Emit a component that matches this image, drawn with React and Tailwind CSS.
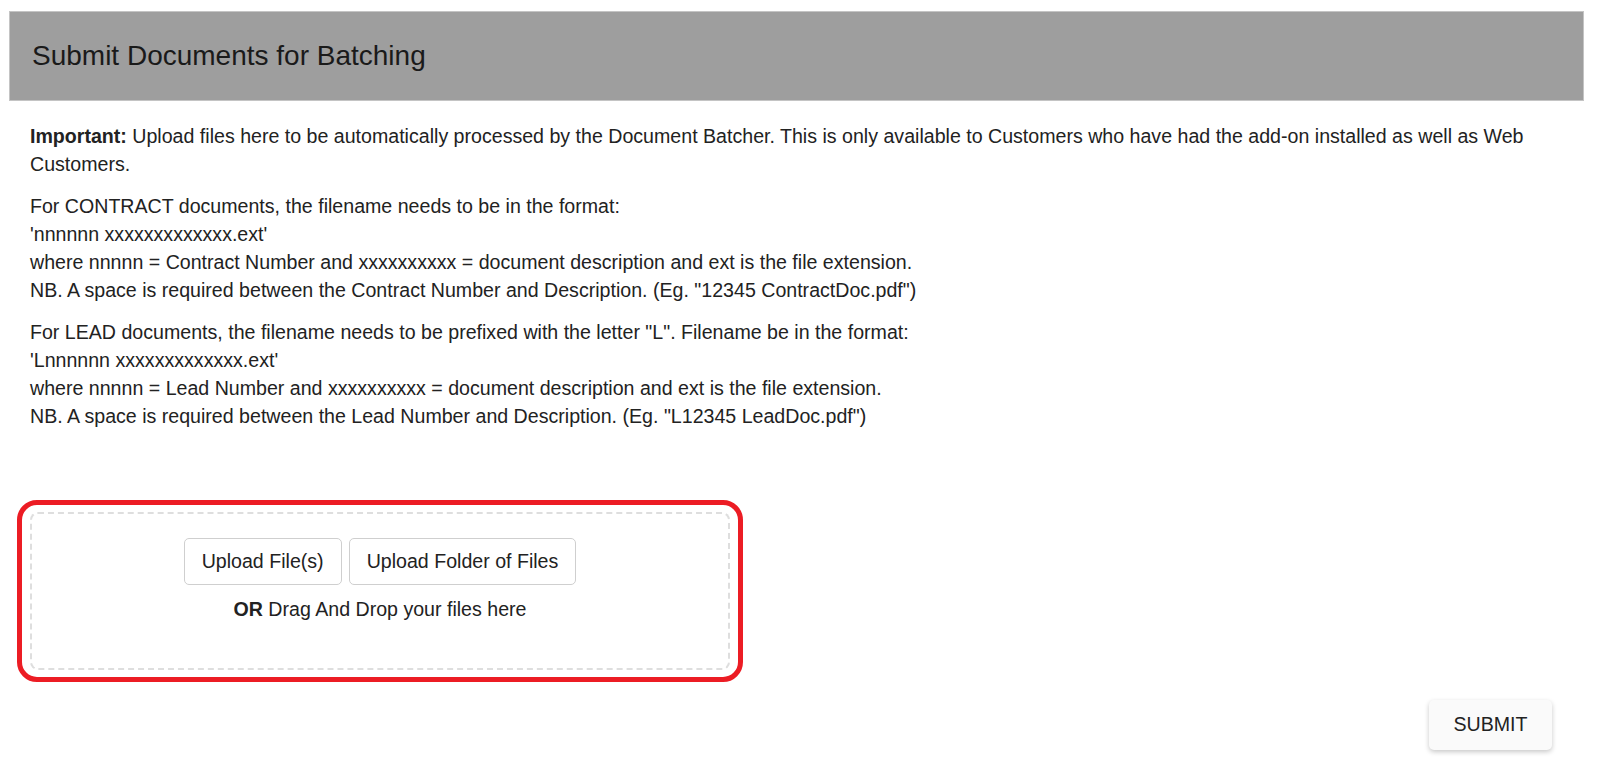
export default function App() {
  const font = { fontFamily: '"Liberation Sans", Arial, sans-serif' };
  return (
    <div className="min-h-screen bg-white text-[#222] pl-[9px] pr-[16px] pt-[11px]" style={font}>
      <div className="h-[90px] bg-[#9e9e9e] border border-[#c4c4c4] flex items-center pl-[22px]">
        <h1 className="text-[28px] leading-[28px] text-[#1a1a1a] font-normal">Submit Documents for Batching</h1>
      </div>
      <div className="px-[21px] pt-[21px] text-[19.6px] leading-[28px]">
        <p className="mb-[14px]">
          <b>Important:</b> Upload files here to be automatically processed by the Document Batcher. This is only available to Customers who have had the add-on installed as well as Web Customers.
        </p>
        <p className="mb-[14px]">
          For CONTRACT documents, the filename needs to be in the format:<br />
          'nnnnnn xxxxxxxxxxxxx.ext'<br />
          where nnnnn = Contract Number and xxxxxxxxxx = document description and ext is the file extension.<br />
          NB. A space is required between the Contract Number and Description. (Eg. "12345 ContractDoc.pdf")
        </p>
        <p className="mb-[14px]">
          For LEAD documents, the filename needs to be prefixed with the letter "L". Filename be in the format:<br />
          'Lnnnnnn xxxxxxxxxxxxx.ext'<br />
          where nnnnn = Lead Number and xxxxxxxxxx = document description and ext is the file extension.<br />
          NB. A space is required between the Lead Number and Description. (Eg. "L12345 LeadDoc.pdf")
        </p>
      </div>
      <div className="pl-[8px] pt-[56px]">
        <div className="w-[726px] border-[5px] border-[#ec1c24] rounded-[20px] pt-[7px] pb-[7px] pl-[8px] pr-[8px]">
          <div className="h-[158px] border-2 border-dashed border-[#dedede] rounded-[8px] flex flex-col items-center pt-[24px]">
            <div className="flex gap-[7px]">
              <button className="h-[47px] px-[17px] border border-[#cfcfcf] rounded-[5px] bg-white text-[19.6px] text-[#222]">Upload File(s)</button>
              <button className="h-[47px] px-[17px] border border-[#cfcfcf] rounded-[5px] bg-white text-[19.6px] text-[#222]">Upload Folder of Files</button>
            </div>
            <div className="mt-[10px] text-[19.6px] leading-[28px]">
              <b>OR</b> Drag And Drop your files here
            </div>
          </div>
        </div>
      </div>
      <div className="flex justify-end pr-[32px] pt-[18px]">
        <button className="h-[50px] w-[123px] rounded-[5px] bg-[#fafafa] text-[19.6px] text-[#222] shadow-[0_2px_5px_rgba(0,0,0,0.22)]">SUBMIT</button>
      </div>
    </div>
  );
}
